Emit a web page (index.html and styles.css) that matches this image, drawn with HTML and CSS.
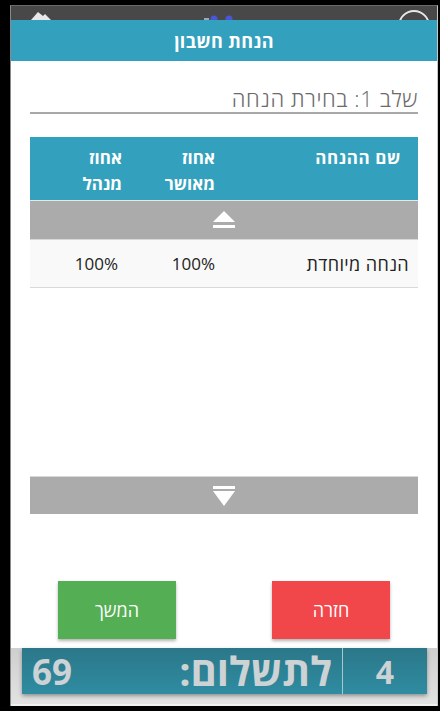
FILE: index.html
```html
<!DOCTYPE html>
<html lang="he">
<head>
<meta charset="utf-8">
<link rel="stylesheet" href="styles.css">
</head>
<body>
<div class="screen">
  <div class="statusbar">
    <svg class="sb-left" width="24" height="14" viewBox="0 0 24 14"><path d="M2 14 L9 6 L14 10 L16 8 L22 14 Z" fill="#e8e8e8"/></svg>
    <svg class="sb-mid" width="30" height="14" viewBox="0 0 30 14"><rect x="0" y="12" width="5" height="2" fill="#9ab"/><circle cx="10" cy="13" r="3.5" fill="#4a55d8"/><circle cx="25" cy="13" r="3.5" fill="#4a55d8"/></svg>
    <svg class="sb-right" width="34" height="14" viewBox="0 0 34 14"><circle cx="17" cy="20" r="15" fill="none" stroke="#e8e8e8" stroke-width="2"/></svg>
  </div>
  <div class="dialog" dir="rtl">
    <div class="dialog-title">הנחת חשבון</div>
    <div class="dialog-body">
      <div class="step">שלב 1: בחירת הנחה</div>
      <div class="table-head">
        <div class="th th-name">שם ההנחה</div>
        <div class="th th-pct">אחוז<br>מאושר</div>
        <div class="th th-mgr">אחוז<br>מנהל</div>
      </div>
      <div class="scroll-bar scroll-up">
        <svg width="24" height="20" viewBox="0 0 24 20"><path d="M1 12 L12 1 L23 12 Z" fill="#fff"/><rect x="1" y="15" width="22" height="3" fill="#fff"/></svg>
      </div>
      <div class="table-row">
        <div class="td td-name">הנחה מיוחדת</div>
        <div class="td td-pct">100%</div>
        <div class="td td-mgr">100%</div>
      </div>
      <div class="table-space"></div>
      <div class="scroll-bar scroll-down">
        <svg width="24" height="22" viewBox="0 0 24 22"><rect x="1" y="1" width="22" height="3" fill="#fff"/><path d="M1 6 L23 6 L12 21 Z" fill="#fff"/></svg>
      </div>
      <div class="buttons">
        <div class="btn btn-back">חזרה</div>
        <div class="btn btn-next">המשך</div>
      </div>
    </div>
  </div>
  <div class="bottom">
    <div class="paybar" dir="rtl">
      <div class="pay-count">4</div>
      <div class="pay-label">לתשלום:</div>
      <div class="pay-sum">69</div>
    </div>
  </div>
</div>
</body>
</html>
```

FILE: styles.css
```css
html, body {
  margin: 0;
  padding: 0;
  background: #000;
}
body {
  width: 440px;
  height: 711px;
  overflow: hidden;
  font-family: "Open Sans", "DejaVu Sans", sans-serif;
}
.screen {
  margin: 5px 0 0 10px;
  width: 426px;
  border-top: 1px solid #6a6a6a;
  border-left: 1px solid #8a8a8a;
  border-right: 1px solid #c8c8c8;
  background: #ddd;
}
.statusbar {
  height: 14px;
  background: #484848;
  position: relative;
  overflow: hidden;
}
.sb-left { position: absolute; left: 18px; top: 0; }
.sb-mid { position: absolute; left: 193px; top: 0; }
.sb-right { position: absolute; left: 386px; top: 0; }

.dialog {
  height: 628px;
  background: #fff;
  display: flex;
  flex-direction: column;
}
.dialog-title {
  height: 41px;
  background: #33a1bd;
  color: #fff;
  font-weight: bold;
  font-size: 18px;
  letter-spacing: 0.4px;
  display: flex;
  align-items: center;
  justify-content: center;
}
.dialog-body {
  flex: 1;
  padding: 0 19px;
  display: flex;
  flex-direction: column;
}
.step {
  margin-top: 23px;
  font-size: 22px;
  letter-spacing: 0.6px;
  font-weight: 300;
  color: #6b6b6b;
  line-height: 28px;
  border-bottom: 2px solid #a8a8a8;
}
.table-head {
  margin-top: 23px;
  height: 64px;
  background: #33a1bd;
  display: grid;
  grid-template-columns: 187px 93px 1fr;
  border-bottom: 1px solid #dfe9ec;
  box-sizing: border-box;
}
.th {
  color: #fff;
  font-weight: bold;
  font-size: 17px;
  line-height: 26px;
  padding-top: 8px;
}
.th-name { padding-right: 17px; letter-spacing: 0.6px; }
.th-pct { padding-right: 16px; }
.th-mgr { padding-right: 16px; }

.scroll-bar {
  background: #ababab;
  display: flex;
  align-items: center;
  justify-content: center;
}
.scroll-up {
  height: 38px;
  border-bottom: 1px solid #d8d8d8;
}
.scroll-down {
  height: 37px;
  border-top: 1px solid #d8d8d8;
}
.table-row {
  height: 47px;
  background: #f9f9f9;
  border-bottom: 1px solid #d9d9d9;
  display: grid;
  grid-template-columns: 187px 93px 1fr;
  align-items: center;
}
.td {
  font-size: 17px;
  color: #222;
}
.td-name { padding-right: 9px; font-size: 18px; letter-spacing: 0.4px; }
.td-pct { padding-right: 16px; }
.td-mgr { padding-right: 20px; }
.table-space {
  height: 188px;
}
.buttons {
  margin-top: 67px;
  display: flex;
  justify-content: space-between;
  padding: 0 28px 0 28px;
}
.btn {
  width: 118px;
  height: 58px;
  color: #fff;
  font-size: 18px;
  display: flex;
  align-items: center;
  justify-content: center;
  box-shadow: 0 2px 3px rgba(0,0,0,0.3);
}
.btn-back { background: #f1474b; }
.btn-next { background: #54ae54; }

.bottom {
  height: 56px;
  background: linear-gradient(#cfcfcf, #e2e2e2);
  padding: 0 10px 0 11px;
  border-bottom: 2px solid #f0f0f0;
}
.paybar {
  height: 46px;
  background: linear-gradient(#2b7789, #2f8ca1);
  box-shadow: 0 2px 4px rgba(0,0,0,0.35);
  display: flex;
  align-items: center;
  color: #cdd2d5;
  font-weight: bold;
}
.pay-count {
  width: 84px;
  height: 100%;
  border-left: 1px solid #a9c7cf;
  display: flex;
  align-items: center;
  justify-content: center;
  font-size: 32px;
}
.pay-label {
  flex: 1;
  padding-right: 10px;
  font-size: 40px;
  line-height: 46px;
}
.pay-sum {
  padding-left: 10px;
  font-size: 35px;
}
```
